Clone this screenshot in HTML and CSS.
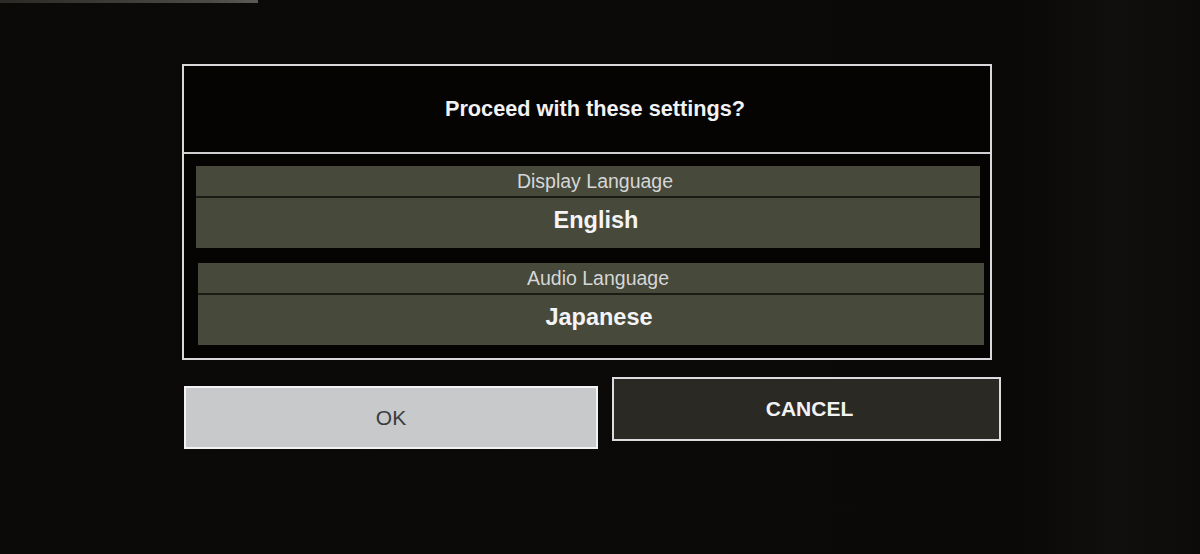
FILE: index.html
```html
<!DOCTYPE html>
<html lang="en">
<head>
<meta charset="utf-8">
<title>Proceed with these settings?</title>
<link rel="stylesheet" href="styles.css">
</head>
<body>
<div class="screen">
  <div class="topbar"></div>
  <div class="stage">
    <div class="dialog">
      <div class="title">Proceed with these settings?</div>
      <div class="rows">
        <div class="group">
          <div class="label">Display Language</div>
          <div class="value">English</div>
        </div>
        <div class="group group-second">
          <div class="label">Audio Language</div>
          <div class="value">Japanese</div>
        </div>
      </div>
    </div>
    <div class="buttons">
      <div class="btn btn-ok">OK</div>
      <div class="btn btn-cancel">CANCEL</div>
    </div>
  </div>
</div>
</body>
</html>
```
FILE: styles.css
```css
html, body {
  margin: 0;
  padding: 0;
}
body {
  width: 1200px;
  height: 554px;
  overflow: hidden;
  background: #0b0908;
  font-family: "Liberation Sans", Arial, sans-serif;
}
.screen {
  position: relative;
  width: 1200px;
  height: 554px;
  background: linear-gradient(90deg, #0c0a08 0%, #0b0908 85%, #110f0d 93%, #0d0b0a 100%);
}
.topbar {
  position: absolute;
  left: 0;
  top: 0;
  width: 258px;
  height: 3px;
  background: linear-gradient(90deg, #2a2a26, #4a4b45 80%, #5a5b55);
}
.stage {
  padding: 64px 0 0 182px;
  display: flex;
  flex-direction: column;
}
.dialog {
  width: 806px;
  height: 292px;
  border: 2px solid #d9d9dc;
  background: #050403;
  display: flex;
  flex-direction: column;
}
.title {
  height: 86px;
  border-bottom: 2px solid #cfcfd2;
  display: flex;
  align-items: center;
  justify-content: center;
  padding-left: 16px;
  color: #f2f2f4;
  font-size: 21.7px;
  font-weight: bold;
}
.rows {
  padding: 12px 10px 0 12px;
  display: flex;
  flex-direction: column;
  gap: 15px;
}
.group {
  background: #47493a;
  display: flex;
  flex-direction: column;
}
.group-second {
  margin-left: 2px;
  margin-right: -4px;
}
.label {
  height: 30px;
  border-bottom: 2px solid #1b1b16;
  display: flex;
  align-items: center;
  justify-content: center;
  padding-left: 14px;
  color: #d6d6d8;
  font-size: 19.5px;
}
.value {
  height: 50px;
  box-sizing: border-box;
  padding: 0 0 5px 16px;
  display: flex;
  align-items: center;
  justify-content: center;
  color: #f4f4f6;
  font-size: 23.5px;
  font-weight: bold;
}
.buttons {
  display: flex;
  align-items: flex-start;
  gap: 14px;
  margin-top: 17px;
  margin-left: 2px;
}
.btn {
  display: flex;
  align-items: center;
  justify-content: center;
  font-size: 21px;
  box-sizing: border-box;
}
.btn-ok {
  width: 414px;
  height: 63px;
  margin-top: 9px;
  background: #c7c9cb;
  border: 2px solid #f2f2f4;
  color: #3b3b3d;
}
.btn-cancel {
  width: 389px;
  height: 64px;
  padding-left: 6px;
  background: #2a2923;
  border: 2px solid #dcdcdf;
  color: #f2f2f4;
  font-weight: bold;
}
```
